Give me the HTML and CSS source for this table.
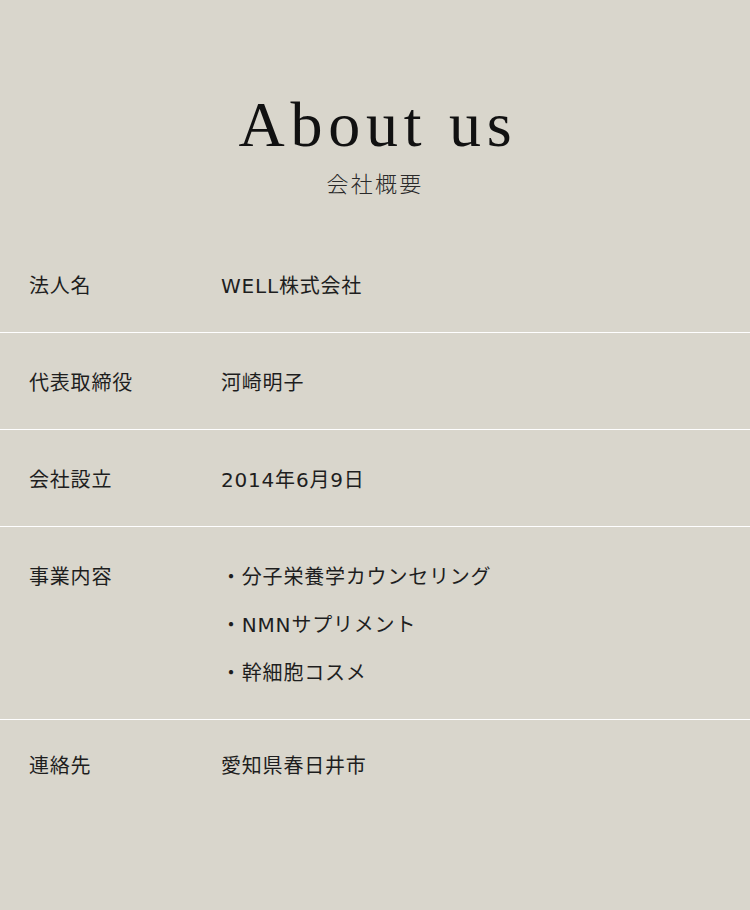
FILE: index.html
```html
<!DOCTYPE html>
<html lang="ja">
<head>
<meta charset="utf-8">
<title>About us</title>
<link rel="stylesheet" href="styles.css">
</head>
<body>
<section class="about">
  <header class="about-head">
    <h2 class="about-title">About us</h2>
    <p class="about-sub">会社概要</p>
  </header>
  <dl class="info">
    <div class="info-row">
      <dt class="info-label">法人名</dt>
      <dd class="info-value">WELL株式会社</dd>
    </div>
    <div class="info-row">
      <dt class="info-label">代表取締役</dt>
      <dd class="info-value">河崎明子</dd>
    </div>
    <div class="info-row">
      <dt class="info-label">会社設立</dt>
      <dd class="info-value">2014年6月9日</dd>
    </div>
    <div class="info-row">
      <dt class="info-label">事業内容</dt>
      <dd class="info-value">
        <ul class="biz-list">
          <li>・分子栄養学カウンセリング</li>
          <li>・NMNサプリメント</li>
          <li>・幹細胞コスメ</li>
        </ul>
      </dd>
    </div>
    <div class="info-row">
      <dt class="info-label">連絡先</dt>
      <dd class="info-value">愛知県春日井市</dd>
    </div>
  </dl>
</section>
</body>
</html>
```
FILE: styles.css
```css
html, body {
  margin: 0;
  padding: 0;
}
body {
  background: #d9d6cc;
  color: #1e1e1e;
  font-family: "DejaVu Sans", "Noto Sans CJK JP", sans-serif;
  min-height: 910px;
}
.about {
  padding-top: 90px;
}
.about-head {
  text-align: center;
}
.about-title {
  margin: 0;
  font-family: "Liberation Serif", "Times New Roman", serif;
  font-weight: normal;
  font-size: 64px;
  line-height: 70px;
  letter-spacing: 0.09em;
  color: #111;
  padding-left: 6px;
}
.about-sub {
  margin: 10px 0 0;
  font-family: "Liberation Serif", "Noto Sans CJK JP", serif;
  font-size: 22px;
  line-height: 30px;
  letter-spacing: 0.1em;
  color: #2a2a2a;
  font-weight: 300;
}
.info {
  margin: 36px 0 0;
}
.info-row {
  display: grid;
  grid-template-columns: 192px 1fr;
  padding: 26px 0 22px 29px;
  border-bottom: 1px solid #ffffff;
}
.info-row:last-child {
  border-bottom: none;
  padding-top: 22px;
}
.info-label,
.info-value {
  margin: 0;
  font-size: 20px;
  line-height: 48px;
  letter-spacing: 0.04em;
}
.biz-list {
  list-style: none;
  margin: 0;
  padding: 0;
}
.biz-list li {
  line-height: 48px;
}
```
